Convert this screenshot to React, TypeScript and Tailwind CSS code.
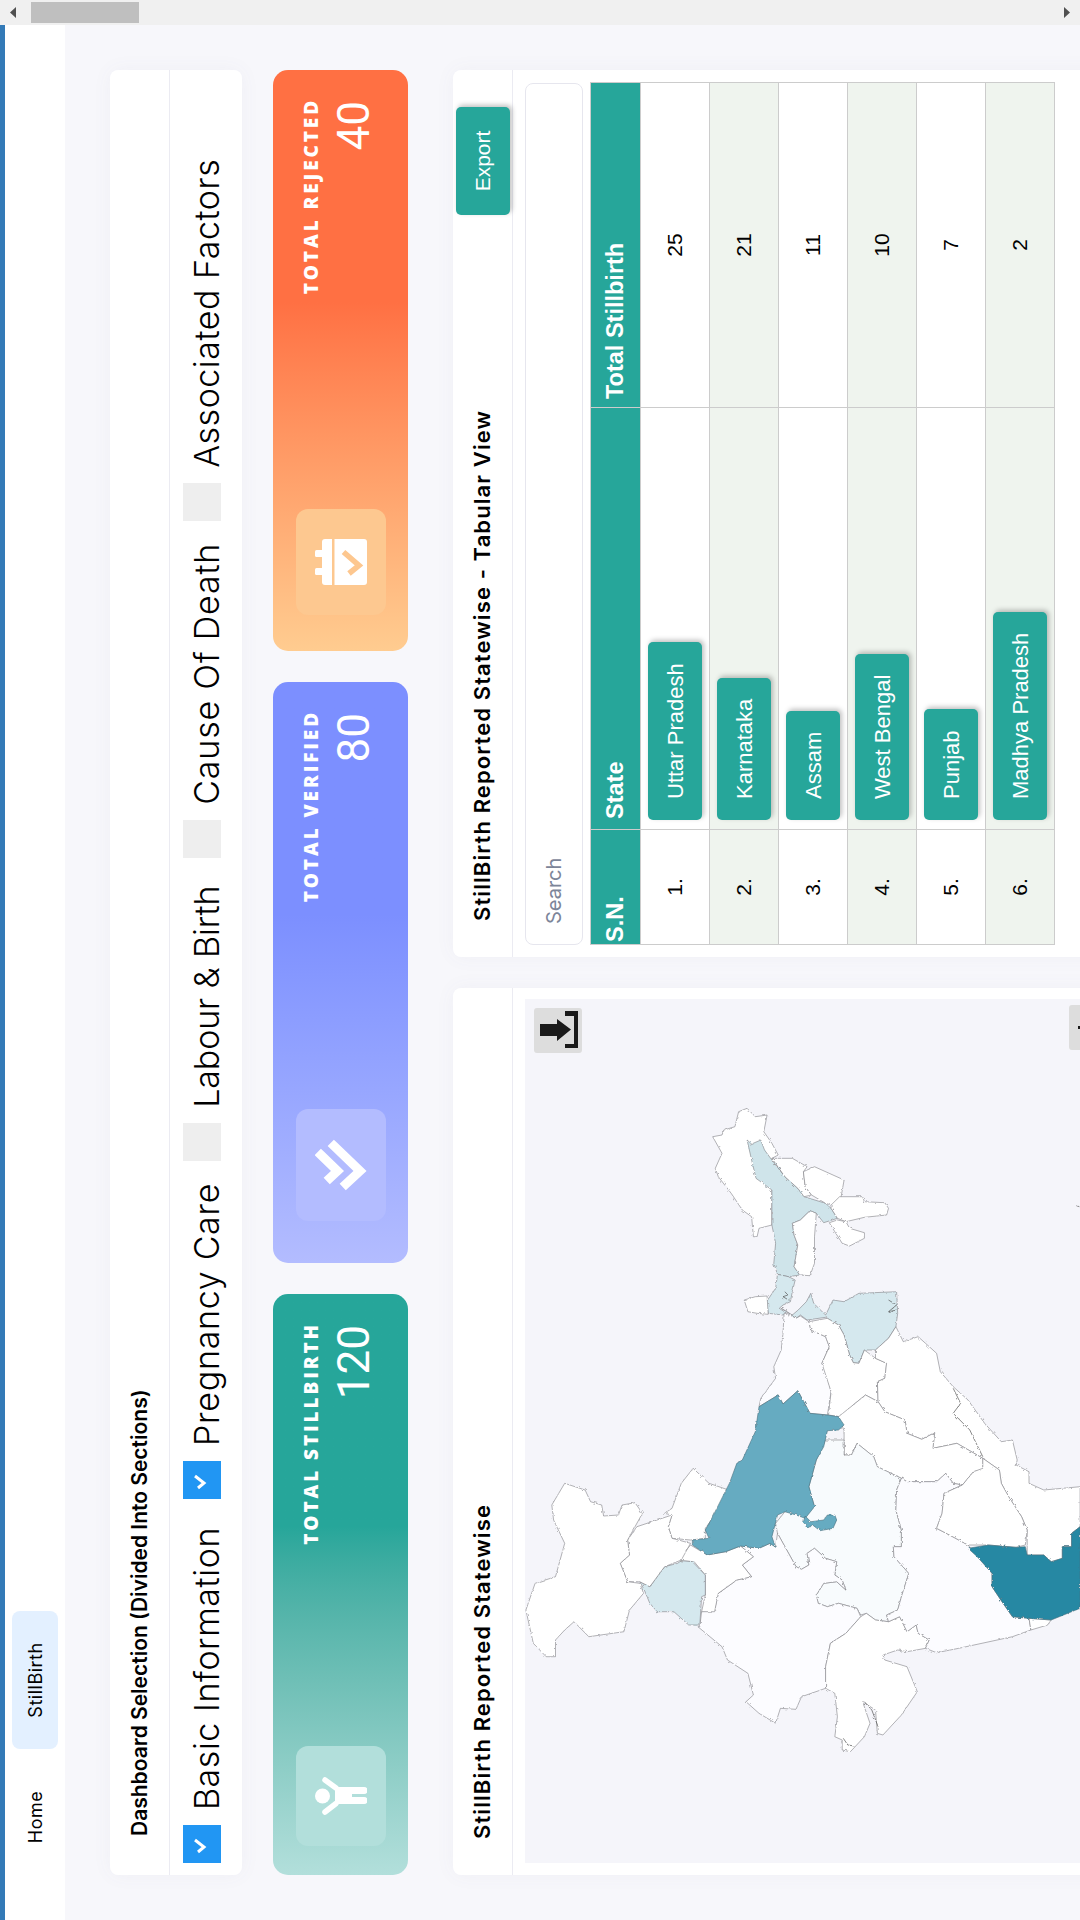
import type { ReactNode } from "react";

const SANS = "font-['Inter','Noto_Sans',sans-serif]";
const ARIAL = "font-['Liberation_Sans',Arial,sans-serif]";

// traced from the map, x/y measured on the sideways picture; toSvg turns them upright
const toSvg = (s: string) =>
  s
    .trim()
    .split(/\s+/)
    .map((p) => {
      const [x, y] = p.split(",").map(Number);
      return `${(883 - y / 3).toFixed(1)},${(x / 2.703 - 25).toFixed(1)}`;
    })
    .join(" ");

const WHITE = "#ffffff";
const NEAR = "#fcfcff";
const PALE = "#f8fbfd";
const ICE = "#cfe4ea";
const ICE2 = "#d5e8ee";
const MID = "#66abc1";
const DEEP = "#2688a3";

const REGIONS: { fill: string; pts: string }[] = [
  { fill: WHITE, pts: "575,470 600,465 605,450 635,440 645,395 668,385 690,410 722,405 713,455 735,490 752,525 735,535 770,590 735,630 735,735 700,745 695,770 685,770 680,710 655,690 625,640 590,590 582,565 600,520" },
  { fill: ICE, pts: "668,480 680,492 705,480 715,510 735,540 770,590 805,625 822,650 880,670 895,685 912,715 875,728 855,700 838,692 812,720 790,730 795,765 805,795 795,860 810,885 780,890 750,883 740,850 745,790 735,735 735,630 692,595 680,540" },
  { fill: WHITE, pts: "790,730 812,720 838,692 855,700 850,770 850,850 838,887 810,885 795,860 805,795 795,765" },
  { fill: WHITE, pts: "735,535 790,535 830,560 820,575 825,620 842,645 822,650 805,625 770,590" },
  { fill: WHITE, pts: "830,570 850,560 930,600 918,675 895,675 880,670 842,645 825,620 820,575" },
  { fill: WHITE, pts: "895,675 918,650 980,650 985,665 1040,668 1050,685 1045,705 985,712 935,725 912,715 895,685" },
  { fill: WHITE, pts: "890,728 912,720 935,725 945,745 985,758 985,775 945,798 925,790 905,755" },
  { fill: ICE2, pts: "750,883 780,890 798,900 790,935 785,965 765,975 755,985 775,1000 765,1005 725,1000 720,965 745,925" },
  { fill: ICE2, pts: "760,985 775,995 800,1015 812,1005 830,1020 880,1012 915,1035 930,1065 945,1125 955,1148 970,1150 985,1110 1015,1110 1050,1075 1070,1040 1075,1000 1072,935 970,940 930,965 900,960 880,1005 848,970 840,940 828,965 806,990 790,1005" },
  { fill: WHITE, pts: "660,960 690,950 722,948 725,1003 695,1000 670,995" },
  { fill: NEAR, pts: "768,1000 765,1060 760,1110 740,1160 745,1195 705,1255 700,1280 752,1245 765,1272 805,1232 838,1300 885,1305 895,1235 880,1170 870,1150 890,1100 880,1070 840,1050 835,1025 812,1008 800,1015 775,1000" },
  { fill: WHITE, pts: "835,1025 885,1015 915,1035 930,1065 945,1125 955,1148 970,1150 985,1110 1015,1135 1045,1150 1040,1195 1020,1205 1022,1265 988,1245 960,1270 920,1310 888,1305 895,1235 870,1150 890,1100 880,1070 840,1050" },
  { fill: WHITE, pts: "1070,1040 1090,1085 1130,1070 1150,1090 1180,1120 1190,1175 1225,1220 1265,1260 1310,1330 1355,1385 1385,1380 1398,1440 1395,1455 1430,1475 1430,1510 1470,1530 1568,1520 1568,1640 1545,1660 1545,1700 1520,1700 1520,1735 1490,1745 1470,1725 1425,1725 1425,1650 1410,1610 1375,1550 1355,1510 1350,1470 1305,1435 1235,1390 1170,1405 1175,1358 1140,1378 1100,1360 1095,1320 1040,1295 1022,1265 1020,1205 1040,1195 1045,1150 1015,1135 1015,1110 1050,1075" },
  { fill: WHITE, pts: "1022,1265 1040,1295 1095,1320 1100,1360 1140,1378 1175,1358 1170,1405 1235,1390 1305,1435 1305,1468 1280,1475 1250,1515 1225,1510 1205,1480 1180,1505 1100,1505 1085,1495 1020,1460 1010,1430 965,1390 950,1425 930,1425 930,1352 915,1310 960,1270 988,1245" },
  { fill: PALE, pts: "880,1380 930,1380 930,1425 950,1425 965,1390 1010,1430 1020,1460 1085,1495 1072,1530 1070,1590 1085,1650 1085,1700 1063,1700 1065,1730 1105,1780 1085,1850 1075,1890 1045,1905 1050,1925 1015,1920 990,1900 975,1905 965,1885 915,1870 885,1880 860,1870 855,1845 875,1810 910,1805 935,1830 925,1800 905,1785 910,1745 880,1735 850,1705 830,1720 835,1755 815,1768 800,1760 750,1660 745,1630 770,1595 850,1580 835,1520 855,1440" },
  { fill: NEAR, pts: "535,1940 600,2000 615,2040 670,2080 685,2145 665,2165 700,2200 745,2230 758,2185 800,2188 815,2150 880,2125 880,2060 893,1990 935,1960 975,1910 965,1885 915,1870 885,1880 860,1870 855,1845 875,1810 910,1805 935,1830 925,1800 905,1785 910,1745 880,1735 850,1705 830,1720 835,1755 815,1768 800,1760 750,1660 745,1700 730,1690 700,1705 650,1698 685,1730 655,1755 680,1790 640,1800 590,1840 580,1890 545,1895 540,1940" },
  { fill: WHITE, pts: "515,1695 560,1725 610,1715 650,1698 685,1730 655,1755 680,1790 640,1800 590,1840 580,1895 545,1895 555,1845 555,1785 525,1745 490,1742 485,1735" },
  { fill: ICE2, pts: "490,1742 520,1745 555,1785 555,1845 545,1850 540,1935 510,1935 470,1895 425,1895 405,1870 390,1830 378,1805 405,1820 445,1760 480,1750" },
  { fill: WHITE, pts: "515,1680 555,1675 555,1645 575,1615 618,1530 565,1510 522,1465 490,1510 465,1585 445,1600 465,1605 455,1640 465,1675" },
  { fill: WHITE, pts: "465,1605 370,1640 345,1680 350,1725 325,1750 345,1805 378,1805 405,1820 445,1760 490,1740 515,1690 465,1675 455,1640" },
  { fill: WHITE, pts: "175,1510 230,1530 245,1565 275,1575 280,1608 320,1605 330,1575 365,1568 385,1600 365,1640 345,1680 350,1725 325,1750 345,1805 378,1810 388,1840 350,1890 335,1955 240,1970 200,1925 175,1950 150,1980 150,2030 125,2030 90,1990 70,1890 95,1810 150,1790 175,1690 145,1620 140,1575" },
  { fill: WHITE, pts: "880,2125 905,2140 912,2210 905,2270 925,2280 925,2310 947,2315 985,2270 1000,2230 980,2165 1015,2190 1020,2260 1035,2265 1085,2205 1128,2135 1100,2060 1040,2040 1035,2025 1075,2010 1100,2015 1150,2005 1160,1980 1130,1960 1125,1935 1100,1955 1080,1910 1050,1925 1015,1920 990,1900 975,1910 935,1960 893,1990 880,2060" },
  { fill: NEAR, pts: "1085,1495 1100,1505 1180,1505 1205,1480 1225,1510 1250,1515 1200,1540 1195,1600 1180,1645 1215,1665 1265,1695 1330,1780 1330,1820 1360,1870 1385,1910 1430,1915 1435,1950 1385,1970 1240,2005 1180,2018 1150,2005 1160,1980 1130,1960 1125,1935 1100,1955 1080,1910 1050,1925 1045,1905 1075,1890 1085,1850 1105,1780 1065,1730 1063,1700 1085,1700 1085,1650 1070,1590 1072,1530" },
  { fill: WHITE, pts: "1200,1540 1195,1600 1180,1645 1215,1665 1265,1695 1320,1695 1395,1702 1420,1695 1425,1650 1410,1610 1375,1550 1355,1510 1350,1470 1305,1435 1305,1465 1280,1475 1250,1515" },
  { fill: WHITE, pts: "1430,1915 1490,1920 1480,1935 1435,1950" },
  { fill: MID, pts: "700,1280 752,1245 765,1272 805,1232 838,1300 885,1305 915,1310 930,1335 915,1350 885,1352 875,1400 855,1440 835,1520 850,1580 825,1615 800,1605 770,1595 750,1605 735,1670 745,1702 730,1690 700,1705 650,1698 610,1715 560,1725 520,1695 520,1680 565,1675 555,1650 570,1620 620,1510 640,1450 655,1440 690,1355" },
  { fill: MID, pts: "825,1608 840,1625 875,1620 885,1605 905,1605 910,1620 900,1645 865,1652 845,1635 830,1645 820,1625" },
  { fill: DEEP, pts: "1265,1705 1320,1695 1395,1702 1420,1700 1425,1725 1470,1725 1490,1745 1520,1735 1520,1700 1545,1700 1545,1660 1568,1640 1568,1885 1490,1920 1430,1915 1385,1910 1360,1870 1330,1820 1330,1780 1290,1730" },
];

const BORDERS = [
  "1225,1225 1245,1270 1225,1300 1270,1350 1285,1385 1305,1430",
  "770,935 778,945 765,950 780,960",
  "1050,960 1072,975 1050,995 1072,990",
  "985,2165 1005,2190 1022,2240",
  "928,2275 940,2295 958,2298",
  "1558,677 1566,680",
];

function IndiaMap() {
  return (
    <svg viewBox="0 0 864 560" className="block h-[560px] w-[864px]">
      <defs>
        <filter id="rough" x="0" y="0" width="100%" height="100%">
          <feTurbulence type="fractalNoise" baseFrequency="0.3" numOctaves="2" seed="4" />
          <feDisplacementMap in="SourceGraphic" scale="3" />
        </filter>
      </defs>
      <g filter="url(#rough)">
        {REGIONS.map((r, i) => (
          <polygon
            key={i}
            points={toSvg(r.pts)}
            fill={r.fill}
            stroke={r.fill === DEEP || r.fill === MID ? "#4a6f7c" : "#808084"}
            strokeWidth={0.6}
            strokeLinejoin="round"
          />
        ))}
        {BORDERS.map((b, i) => (
          <polyline key={i} points={toSvg(b)} fill="none" stroke="#555" strokeWidth={0.7} />
        ))}
      </g>
    </svg>
  );
}

function PersonIcon() {
  return (
    <svg width="38" height="52" viewBox="0 0 38 52" fill="#fff" stroke="#fff">
      <circle cx="19" cy="7.5" r="7.5" stroke="none" />
      <path d="M27 21 35 10M11.500 21 3 10" strokeWidth="5.500" strokeLinecap="round" fill="none" />
      <path d="M11 20h17v17H11z" stroke="none" />
      <path d="M14.500 36v13M24.500 36v13" strokeWidth="7" strokeLinecap="round" fill="none" />
    </svg>
  );
}

function DoubleChevronIcon() {
  return (
    <svg width="52" height="52" viewBox="0 0 52 52" fill="none" stroke="#fff" strokeWidth="9" strokeLinecap="square" strokeLinejoin="miter">
      <path d="M36 6 20 22.500 13 15" />
      <path d="M45 19 20 45 7 31" />
    </svg>
  );
}

function CalendarCheckIcon() {
  return (
    <svg width="46" height="52" viewBox="0 0 46 52" fill="#fff">
      <rect x="10" y="0" width="7" height="10" rx="1.500" />
      <rect x="28" y="0" width="7" height="10" rx="1.500" />
      <path d="M3 7h40a3 3 0 0 1 3 3v7H0v-7a3 3 0 0 1 3-3z" />
      <path d="M0 19.500h46V49a3 3 0 0 1-3 3H3a3 3 0 0 1-3-3z" />
      <path d="M11.500 34 19.500 44 33 28.500" fill="none" stroke="#fdc78f" strokeWidth="5.500" />
    </svg>
  );
}

const STATS: {
  title: string;
  value: string;
  gradient: string;
  box: string;
  icon: ReactNode;
}[] = [
  {
    title: "Total Stillbirth",
    value: "120",
    gradient: "from-[#b2dfdb] to-[#26a69a] to-60%",
    box: "ml-[29px] w-[100px] bg-[#b2dfdb]",
    icon: <PersonIcon />,
  },
  {
    title: "Total Verified",
    value: "80",
    gradient: "from-[#b3bcff] to-[#7c8fff] to-60%",
    box: "ml-[42px] w-[112px] bg-[#b3bcff]",
    icon: <DoubleChevronIcon />,
  },
  {
    title: "Total Rejected",
    value: "40",
    gradient: "from-[#ffcc90] to-[#ff7043] to-60%",
    box: "ml-[36px] w-[106px] bg-[#fdc890]",
    icon: <CalendarCheckIcon />,
  },
];

const SECTIONS = [
  { label: "Basic Information", checked: true, fit: "mr-[28px] tracking-[0.53px]" },
  { label: "Pregnancy Care", checked: true, fit: "mr-[22px] tracking-[0.7px]" },
  { label: "Labour & Birth", checked: false, fit: "mr-[28px] tracking-[-0.14px]" },
  { label: "Cause Of Death", checked: false, fit: "mr-[22px] tracking-[0.8px]" },
  { label: "Associated Factors", checked: false, fit: "mr-[20px] tracking-[0.5px]" },
];

const ROWS = [
  { state: "Uttar Pradesh", total: 25 },
  { state: "Karnataka", total: 21 },
  { state: "Assam", total: 11 },
  { state: "West Bengal", total: 10 },
  { state: "Punjab", total: 7 },
  { state: "Madhya Pradesh", total: 2 },
];

function Card({ title, action, children }: { title: string; action?: ReactNode; children: ReactNode }) {
  return (
    <div className="h-[700px] rounded-[8px] bg-white shadow-[0_0_20px_rgba(90,90,140,0.05)]">
      <div className="flex h-[60px] items-center justify-between border-b border-[#ebebf2] pl-[36px] pr-[37px]">
        <h2 className={`${SANS} text-[22px] font-semibold tracking-[1.100px] text-black`}>{title}</h2>
        {action}
      </div>
      <div className="p-[12px]">{children}</div>
    </div>
  );
}

export default function App() {
  return (
    <div className="h-[1920px] w-[1080px] overflow-hidden">
      {/* the whole page is shown lying on its side */}
      <div className="flex h-[1080px] w-[1920px] origin-top-left translate-y-[1920px] -rotate-90">
        <div className="h-[1080px] w-[1895px] overflow-hidden bg-[#f7f7fb]">
          <nav className={`${SANS} flex h-[65px] items-center gap-[10px] border-t-[5px] border-[#337ab7] bg-white pl-[45px] text-[18px] tracking-[0.5px] text-black`}>
            <a className="flex h-[46px] w-[116px] items-center justify-center">Home</a>
            <a className="flex h-[46px] w-[138px] items-center justify-center rounded-[8px] bg-[#e3f0ff]">StillBirth</a>
          </nav>

          <div className="px-[45px] pt-[45px]">
            <section className="h-[132px] rounded-[8px] bg-white shadow-[0_0_20px_rgba(90,90,140,0.05)]">
              <div className="flex h-[60px] items-center border-b border-[#ebebf2] pl-[39px]">
                <h2 className={`${SANS} text-[21px] font-semibold text-black`}>Dashboard Selection (Divided Into Sections)</h2>
              </div>
              <div className="flex h-[72px] items-start pl-[12px] pt-[13px]">
                {SECTIONS.map((s) => (
                  <label key={s.label} className={`flex items-start gap-[15px] ${s.fit}`}>
                    <span className={`flex h-[38px] w-[38px] shrink-0 items-center justify-center ${s.checked ? "bg-[#2196f3]" : "bg-[#eeeeee]"}`}>
                      {s.checked && (
                        <svg width="38" height="38" viewBox="0 0 38 38" fill="none" stroke="#fff" strokeWidth="3">
                          <path d="M11 15 16 21 23 12" />
                        </svg>
                      )}
                    </span>
                    <span className={`${SANS} whitespace-nowrap text-[34px] font-light leading-[48px] text-black`}>{s.label}</span>
                  </label>
                ))}
              </div>
            </section>

            <div className="mt-[31px] grid grid-cols-3 gap-[31px]">
              {STATS.map((s) => (
                <div key={s.title} className={`flex h-[135px] items-center justify-between rounded-[15px] bg-linear-to-r pr-[28px] ${s.gradient}`}>
                  <div className={`flex h-[90px] items-center justify-center rounded-[12px] ${s.box}`}>{s.icon}</div>
                  <div className="pb-[5px] text-right text-white">
                    <div className="font-['Open_Sans',sans-serif] text-[19px] font-extrabold uppercase leading-[22px] tracking-[2.900px]">{s.title}</div>
                    <div className="mt-[9px] pr-[3px] font-['Roboto',sans-serif] text-[44px] leading-[46px]">{s.value}</div>
                  </div>
                </div>
              ))}
            </div>

            <div className="mt-[45px] grid grid-cols-2 gap-[31px]">
              <Card title="StillBirth Reported Statewise">
                <div className="relative h-[560px] w-[864px] overflow-hidden bg-[#f5f5fa]">
                  <IndiaMap />
                  <button className="absolute left-[810px] top-[9px] flex h-[48px] w-[45px] items-start justify-center rounded-[3px] bg-[#dddddd]">
                    <svg width="45" height="48" viewBox="0 0 45 48" fill="#1a1a1a">
                      <path d="M17 6h12v17h5L23.500 37 12 23h5z" />
                      <path d="M5 31h4v9h28v-9h5v13H5z" />
                    </svg>
                  </button>
                  <button className="absolute left-[813px] top-[544px] h-[45px] w-[45px] rounded-[3px] bg-[#dddddd]">
                    <svg width="45" height="45" viewBox="0 0 45 45" fill="#1a1a1a" className="block">
                      <rect x="21" y="9" width="3" height="27" />
                    </svg>
                  </button>
                </div>
              </Card>

              <Card
                title="StillBirth Reported Statewise - Tabular View"
                action={
                  <button className={`${ARIAL} h-[54px] w-[108px] rounded-[5px] bg-[#26a69a] text-[21px] text-white shadow-[2px_2px_5px_rgba(0,0,0,0.25)]`}>
                    Export
                  </button>
                }
              >
                <input
                  placeholder="Search"
                  className={`${SANS} mb-[7px] block h-[58px] w-[862px] rounded-[8px] border border-[#e6e6ee] bg-white px-[20px] text-[20px] placeholder:text-[#7c8599]`}
                />
                <table className={`${ARIAL} w-[862px] table-fixed border-collapse text-[21px] text-black`}>
                  <colgroup>
                    <col className="w-[115px]" />
                    <col className="w-[422px]" />
                    <col className="w-[325px]" />
                  </colgroup>
                  <thead>
                    <tr className="h-[50px] bg-[#26a69a] text-left text-[23.500px] font-bold text-white">
                      <th className="border border-[#cccccc] pl-[2px]">S.N.</th>
                      <th className="border border-[#cccccc] pl-[10px]">State</th>
                      <th className="border border-[#cccccc] pl-[8px]">Total Stillbirth</th>
                    </tr>
                  </thead>
                  <tbody>
                    {ROWS.map((r, i) => (
                      <tr key={r.state} className={`h-[69px] ${i % 2 === 1 ? "bg-[#eff4ee]" : "bg-white"}`}>
                        <td className="border border-[#cccccc] text-center">{i + 1}.</td>
                        <td className="border border-[#cccccc] pl-[9px]">
                          <button className="h-[54px] rounded-[5px] bg-[#26a69a] px-[21px] text-[22px] text-white shadow-[2px_2px_5px_rgba(0,0,0,0.25)]">
                            {r.state}
                          </button>
                        </td>
                        <td className="border border-[#cccccc] text-center">{r.total}</td>
                      </tr>
                    ))}
                  </tbody>
                </table>
              </Card>
            </div>
          </div>
        </div>

        <div className="h-[1080px] w-[25px] bg-[#f0f0f0]">
          <svg width="25" height="1080" viewBox="0 0 25 1080" className="block">
            <path d="M12.500 10 18 16H7zM12.500 1070 18 1064H7z" fill="#505050" />
            <rect x="2" y="31" width="21" height="108" fill="#bfbfbf" />
          </svg>
        </div>
      </div>
    </div>
  );
}
